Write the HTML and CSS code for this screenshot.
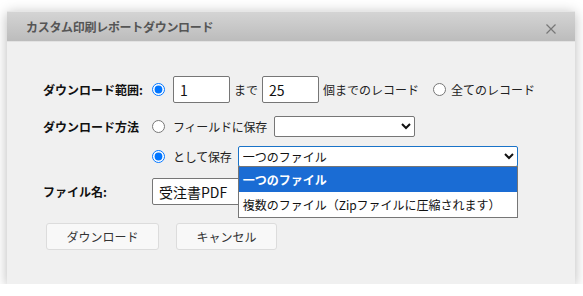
FILE: index.html
```html
<!DOCTYPE html>
<html lang="ja">
  <head>
    <meta charset="UTF-8" />
    <title>カスタム印刷レポートダウンロード</title>
    <link rel="stylesheet" href="styles.css">
  </head>
  <body>
    <div class="dialog">
      <div class="titlebar">
        <span class="title">カスタム印刷レポートダウンロード</span>
        <span class="close">
          <svg width="10" height="10" viewBox="0 0 10 10"><path d="M0.5 0.5L9.5 9.5M9.5 0.5L0.5 9.5" stroke="#777" stroke-width="1.2" fill="none"/></svg>
        </span>
      </div>
      <div class="body">
        <div class="row row-range">
          <div class="label">ダウンロード範囲:</div>
          <div class="controls">
            <input type="radio" name="range" checked>
            <input type="text" class="num" value="1">
            <span class="txt">まで</span>
            <input type="text" class="num" value="25">
            <span class="txt">個までのレコード</span>
            <input type="radio" name="range" class="all-radio">
            <span class="txt">全てのレコード</span>
          </div>
        </div>
        <div class="row row-method">
          <div class="label">ダウンロード方法</div>
          <div class="controls">
            <input type="radio" name="method">
            <span class="txt">フィールドに保存</span>
            <select class="field-select"><option></option></select>
          </div>
        </div>
        <div class="row row-save">
          <div class="label"></div>
          <div class="controls">
            <input type="radio" name="method" checked>
            <span class="txt">として保存</span>
            <div class="select-wrap">
              <select class="save-select"><option>一つのファイル</option></select>
              <ul class="dropdown">
                <li class="active">一つのファイル</li>
                <li>複数のファイル（Zipファイルに圧縮されます）</li>
              </ul>
            </div>
          </div>
        </div>
        <div class="row row-name">
          <div class="label">ファイル名:</div>
          <div class="controls">
            <input type="text" class="name" value="受注書PDF">
          </div>
        </div>
        <div class="buttons">
          <button class="btn btn-download">ダウンロード</button>
          <button class="btn btn-cancel">キャンセル</button>
        </div>
      </div>
    </div>
  </body>
</html>
```

FILE: styles.css
```css
* {
  box-sizing: border-box;
}
html,
body {
  margin: 0;
  padding: 0;
  background: #fff;
  font-family: "Noto Sans CJK JP", "Noto Sans", sans-serif;
  font-size: 12px;
  color: #222;
}
.dialog {
  width: 568px;
  height: 273px;
  margin: 11px 0 0 7px;
  background: #f0f0f0;
  box-shadow: 0 2px 12px rgba(0, 0, 0, 0.28);
}
.titlebar {
  height: 31px;
  display: flex;
  align-items: center;
  justify-content: space-between;
  padding: 0 19px 0 19px;
  background: linear-gradient(#d4d4d4, #bcbcbc);
  border-top: 1px solid #e6e6e6;
  border-bottom: 1px solid #e2e2e2;
}
.title {
  font-weight: bold;
  color: #555;
  font-size: 12px;
  letter-spacing: -0.3px;
}
.close {
  display: flex;
  margin-top: 4px;
}
.body {
  padding: 34px 0 0 36px;
}
.row {
  display: flex;
  align-items: center;
  height: 27px;
}
.row-method {
  margin-top: 10px;
}
.row-save {
  margin-top: 3px;
}
.row-name {
  margin-top: 8px;
}
.label {
  width: 109px;
  font-weight: bold;
  color: #111;
}
.controls {
  display: flex;
  align-items: center;
}
input[type="radio"] {
  width: 13px;
  height: 13px;
  margin: 0 8px 0 0;
}
.all-radio {
  margin-left: 10px !important;
  margin-right: 5px !important;
}
.txt {
  color: #222;
  margin-right: 4px;
}
.row-method .txt {
  margin-right: 7px;
}
.row-save .txt {
  margin-right: 6px;
}
.row-method .txt,
.row-save .txt {
  letter-spacing: -0.2px;
}
input[type="text"] {
  height: 27px;
  border: 1px solid #767676;
  border-radius: 2px;
  background: #fff;
  font-family: inherit;
  font-size: 14px;
  padding: 0 6px;
  color: #111;
}
.num {
  width: 57px;
  margin-right: 4px;
}
select {
  height: 21px;
  font-family: inherit;
  font-size: 12px;
  background: #fff;
  border: 1px solid #767676;
  border-radius: 2px;
  color: #111;
}
.field-select {
  width: 141px;
}
.select-wrap {
  position: relative;
}
.save-select {
  width: 280px;
  border-color: #1a73c8;
  outline: none;
}
.dropdown {
  position: absolute;
  left: 0;
  top: 20px;
  width: 280px;
  margin: 0;
  padding: 0;
  list-style: none;
  background: #fff;
  border: 1px solid #767676;
  z-index: 2;
}
.dropdown li {
  height: 25px;
  line-height: 25px;
  padding-left: 4px;
  font-size: 12px;
  color: #111;
}
.dropdown li.active {
  background: #1a6cd4;
  color: #fff;
  font-weight: bold;
}
.name {
  width: 130px;
}
.buttons {
  display: flex;
  gap: 17px;
  margin-top: 18px;
  padding-left: 3px;
}
.btn {
  height: 27px;
  background: #f8f8f8;
  border: 1px solid #dcdcdc;
  border-radius: 3px;
  font-family: inherit;
  font-size: 12px;
  color: #333;
}
.btn-download {
  width: 113px;
}
.btn-cancel {
  width: 101px;
}
```
